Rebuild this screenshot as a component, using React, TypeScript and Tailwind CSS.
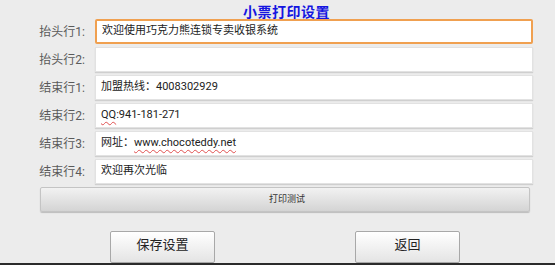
import React from "react";

type Row = { label: string; value: React.ReactNode; focused?: boolean };

const squiggle = "underline decoration-wavy decoration-[#e05050] decoration-1 underline-offset-[3px]";

const ROWS: Row[] = [
  { label: "抬头行1:", value: "欢迎使用巧克力熊连锁专卖收银系统", focused: true },
  { label: "抬头行2:", value: "" },
  { label: "结束行1:", value: "加盟热线：4008302929" },
  {
    label: "结束行2:",
    value: (
      <>
        <span className={squiggle}>QQ</span>:941-181-271
      </>
    ),
  },
  {
    label: "结束行3:",
    value: (
      <>
        网址：<span className={squiggle}>www.chocoteddy.net</span>
      </>
    ),
  },
  { label: "结束行4:", value: "欢迎再次光临" },
];

export default function App() {
  return (
    <div
      className="w-[555px] h-[265px] overflow-hidden bg-[#ececec] border-b-2 border-[#2b2b2b] flex flex-col"
      style={{ fontFamily: '"Roboto", "Noto Sans CJK SC", sans-serif' }}
    >
      {/* title */}
      <div className="h-[26px] flex items-center justify-center pl-[18px] pt-[2px]">
        <h1
          className="text-[14px] font-bold text-[#1515e0] leading-none tracking-[0.5px]"
          style={{ fontFamily: '"Noto Sans CJK SC", sans-serif' }}
        >
          小票打印设置
        </h1>
      </div>

      {/* fields */}
      <div className="flex flex-col gap-[3px]">
        {ROWS.map((r) => (
          <div key={r.label} className="flex items-center h-[25px]">
            <label className="w-[95px] pr-[10px] text-right text-[12px] text-[#5a5a5a]">
              {r.label}
            </label>
            <div
              className={
                "w-[438px] h-full flex items-center px-[5px] bg-white text-[11px] text-[#222] " +
                (r.focused
                  ? "border-2 border-[#f0a050] rounded-[2px]"
                  : "border border-[#e2e2e2] shadow-[0_1px_1px_rgba(0,0,0,0.12)]")
              }
            >
              {r.value}
            </div>
          </div>
        ))}
      </div>

      {/* print test */}
      <div className="pl-[40px] pt-[3px]">
        <button
          type="button"
          className="w-[490px] h-[25px] flex items-center justify-center pl-[4px] bg-gradient-to-b from-[#f2f2f2] to-[#d4d4d4] border border-[#c4c4c4] rounded-[2px] text-[9px] text-[#333] shadow-[0_1px_1px_rgba(0,0,0,0.2)]"
        >
          打印测试
        </button>
      </div>

      {/* actions */}
      <div className="flex pt-[19px]">
        <button
          type="button"
          className="ml-[110px] w-[105px] h-[32px] pb-[4px] bg-gradient-to-b from-white to-[#e4e4e4] border border-[#a8a8a8] rounded-[2px] text-[13px] text-[#222]"
        >
          保存设置
        </button>
        <button
          type="button"
          className="ml-[140px] w-[105px] h-[32px] pb-[4px] bg-gradient-to-b from-white to-[#e4e4e4] border border-[#a8a8a8] rounded-[2px] text-[13px] text-[#222]"
        >
          返回
        </button>
      </div>
    </div>
  );
}
